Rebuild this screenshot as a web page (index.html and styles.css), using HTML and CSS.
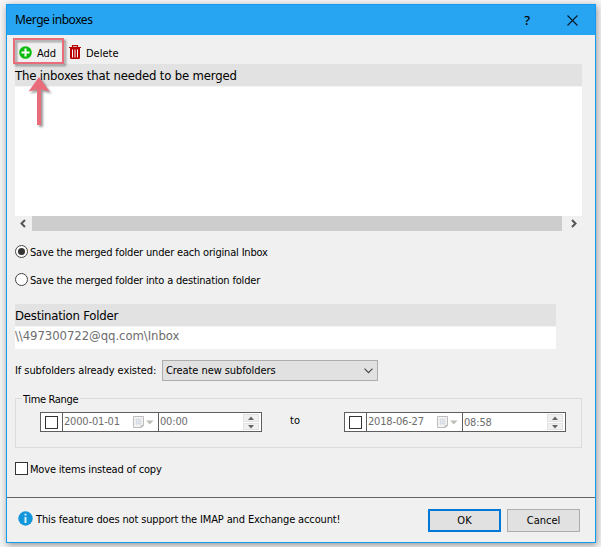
FILE: index.html
```html
<!DOCTYPE html>
<html lang="en">
<head>
<meta charset="utf-8">
<title>Merge inboxes</title>
<link rel="stylesheet" href="styles.css">
</head>
<body>
<main class="window">
  <header class="titlebar">
    <h1><span class="t-title">Merge inboxes</span></h1>
    <span class="help">?</span>
    <svg class="close" width="11" height="11" viewBox="0 0 11 11"><path d="M.5.5l10 10M10.5.5l-10 10" stroke="#0a1a26" stroke-width="1.1"/></svg>
  </header>
  <div class="content">
    <div class="toolbar">
      <div class="tool add">
        <svg width="13" height="13" viewBox="0 0 13 13"><circle cx="6.5" cy="6.5" r="6.3" fill="#0cbc0c"/><path d="M6.5 2.5v8M2.5 6.5h8" stroke="#fff" stroke-width="2"/></svg>
        <span class="t-add">Add</span>
      </div>
      <div class="tool delete">
        <svg width="12" height="14" viewBox="0 0 12 14"><path d="M0 2.500h12M3.500 2V.6h5V2" fill="none" stroke="#b80000" stroke-width="1.2"/><path d="M1 3h10v9.500q0 1.500-1.500 1.500h-7q-1.500 0-1.500-1.500z" fill="#b80000"/><path d="M3.500 4.500v8M6 4.500v8M8.500 4.500v8" stroke="#fff"/></svg>
        <span class="t-delete">Delete</span>
      </div>
    </div>
    <div class="list-head"><span class="t-list">The inboxes that needed to be merged</span></div>
    <div class="list"></div>
    <div class="scrollbar">
      <svg width="17" height="15" viewBox="0 0 17 15"><path d="M10 4L6.500 7.500L10 11" fill="none" stroke="#555" stroke-width="2"/></svg>
      <div class="thumb"></div>
      <svg width="20" height="15" viewBox="0 0 20 15"><path d="M10 4l3.500 3.500L10 11" fill="none" stroke="#555" stroke-width="2"/></svg>
    </div>
    <div class="option first"><span class="radio on"></span><span class="t-under">Save the merged folder under each original Inbox</span></div>
    <div class="option second"><span class="radio"></span><span class="t-into">Save the merged folder into a destination folder</span></div>
    <div class="dest-head"><span class="t-dest">Destination Folder</span></div>
    <div class="dest"><span class="t-mail">\\497300722@qq.com\Inbox</span></div>
    <div class="existing">
      <span class="t-if">If subfolders already existed:</span>
      <div class="select"><span class="t-create">Create new subfolders</span>
        <svg width="9" height="6" viewBox="0 0 9 6"><path d="M.5.7l4 4 4-4" fill="none" stroke="#444" stroke-width="1.100"/></svg>
      </div>
    </div>
    <section class="range">
      <h2><span class="t-range">Time Range</span></h2>
      <div class="datetime">
        <div class="cell check"><span class="box"></span></div>
        <div class="cell date"><span class="t-date">2000-01-01</span>
          <svg width="21" height="13" viewBox="0 0 21 13"><path d="M.5.5h10v9l-2 2h-8z" fill="#f3f3f4" stroke="#bdbdc0"/><path d="M2.500 3.500h6M2.500 5.500h6M2.500 7.500h6M3.500 2.500v6.500M5.500 2.500v6.500M7.500 2.500v6.500" stroke="#cfd5e3" stroke-width=".7"/><path d="M8 12v-2.500h3" fill="none" stroke="#bbb"/><path d="M13 4.500h7.500L16.750 8.500z" fill="#bdbdb8"/></svg>
        </div>
        <div class="cell time"><span class="t-time">00:00</span>
          <div class="spin"><svg width="16" height="8" viewBox="0 0 16 8"><path d="M5 6L8 2.500L11 6z" fill="#666"/></svg><svg width="16" height="7" viewBox="0 0 16 7"><path d="M5 2l3 3.500L11 2z" fill="#666"/></svg></div>
        </div>
      </div>
      <span class="to">to</span>
      <div class="datetime">
        <div class="cell check"><span class="box"></span></div>
        <div class="cell date"><span class="t-date">2018-06-27</span>
          <svg width="21" height="13" viewBox="0 0 21 13"><path d="M.5.5h10v9l-2 2h-8z" fill="#f3f3f4" stroke="#bdbdc0"/><path d="M2.500 3.500h6M2.500 5.500h6M2.500 7.500h6M3.500 2.500v6.500M5.500 2.500v6.500M7.500 2.500v6.500" stroke="#cfd5e3" stroke-width=".7"/><path d="M8 12v-2.500h3" fill="none" stroke="#bbb"/><path d="M13 4.500h7.500L16.750 8.500z" fill="#bdbdb8"/></svg>
        </div>
        <div class="cell time late"><span class="t-time">08:58</span>
          <div class="spin"><svg width="16" height="8" viewBox="0 0 16 8"><path d="M5 6L8 2.500L11 6z" fill="#666"/></svg><svg width="16" height="7" viewBox="0 0 16 7"><path d="M5 2l3 3.500L11 2z" fill="#666"/></svg></div>
        </div>
      </div>
    </section>
    <div class="option move"><span class="box"></span><span class="t-move">Move items instead of copy</span></div>
  </div>
  <footer class="footer">
    <svg width="15" height="15" viewBox="0 0 15 15"><circle cx="7.500" cy="7.500" r="7.200" fill="#1496dc"/><path d="M7.500 2.800v1.800M7.500 6v6" stroke="#d8f0fc" stroke-width="2"/></svg>
    <span class="note"><span class="t-note">This feature does not support the IMAP and Exchange account!</span></span>
    <button class="ok"><span class="t-ok">OK</span></button>
    <button><span class="t-cancel">Cancel</span></button>
  </footer>
  <div class="callout"></div>
  <svg class="arrow" width="26" height="54" viewBox="0 0 26 54"><path d="M11 0L21.500 14.500L13 12.500V48H9V12.500L.5 14.500z" fill="#e96c7b"/></svg>
</main>
</body>
</html>
```

FILE: styles.css
```css
* { box-sizing: border-box; }

body {
  margin: 0;
  padding: 4px 5px 4px 6px;
  height: 547px;
  overflow: hidden;
  background: #f4f4f4;
  color: #000;
  font: 11px/14px "DejaVu Sans Condensed", "DejaVu Sans", sans-serif;
  font-stretch: condensed;
  white-space: nowrap;
}

svg { display: block; flex: none; }

.window {
  position: relative;
  height: 539px;
  border: 1px solid #109bef;
  background: #f0f0f0;
  box-shadow: 1px 2px 7px rgba(0, 0, 0, .4);
}

.titlebar {
  display: flex;
  align-items: center;
  height: 30px;
  padding: 0 17px 0 8px;
  background: #27a5f3;
}

h1 {
  flex: 1;
  margin: 0;
  font: 12px/16px "Noto Sans", sans-serif;
  letter-spacing: -.45px;
}

.help {
  margin-right: 37px;
  font: 500 13px/16px "Noto Sans", sans-serif;
}

.content { height: 462px; padding: 0 13px 0 8px; }

.toolbar { display: flex; height: 29px; padding: 10px 0 0 4px; }
.tool { display: flex; align-items: flex-start; gap: 5px; }
.add { width: 50px; padding-top: 1px; }
.tool span { padding-top: 1px; }
.delete span { margin-top: 1px; }

.list-head, .dest-head {
  height: 23px;
  background: #e2e2e2;
  border-bottom: 1px solid #f4f4f4;
  font-size: 13px;
  line-height: 23px;
  letter-spacing: -.17px;
}

.list { height: 129px; background: #fff; }

.scrollbar { display: flex; height: 15px; }
.thumb { flex: 1; background: #cdcdcd; }

.option {
  display: flex;
  align-items: flex-start;
  gap: 2px;
  height: 14px;
  letter-spacing: -.18px;
}

.option span:last-child { padding-top: 1px; }
.first { margin-top: 14px; }
.second { margin-top: 14px; }

.radio {
  display: grid;
  place-items: center;
  width: 13px;
  height: 13px;
  border: 1px solid #444;
  border-radius: 50%;
  background: #fff;
}

.on::before {
  content: "";
  width: 7px;
  height: 7px;
  border-radius: 50%;
  background: #333;
}

.dest-head { width: 541px; margin-top: 17px; letter-spacing: -.22px; }

.dest {
  width: 541px;
  height: 22px;
  background: #fff;
  color: #6d6d6d;
  font-size: 13px;
  line-height: 18px;
  letter-spacing: -.07px;
}

.existing { display: flex; align-items: center; height: 21px; margin-top: 11px; letter-spacing: -.08px; }
.existing > span { width: 147px; }
.t-create { padding-top: 1px; }

.select {
  display: flex;
  align-items: center;
  justify-content: space-between;
  width: 216px;
  height: 21px;
  padding: 0 4px 0 3px;
  border: 1px solid #adadad;
  background: #e1e1e1;
}

.range {
  position: relative;
  display: flex;
  height: 50px;
  margin-top: 17px;
  padding: 13px 0 0 24px;
  border: 1px solid #dcdcdc;
}

h2 {
  position: absolute;
  top: -6px;
  left: 6px;
  margin: 0;
  padding: 0 1px;
  background: #f0f0f0;
  font: inherit;
  letter-spacing: -.35px;
}

.datetime {
  display: flex;
  width: 222px;
  height: 20px;
  border: 1px solid #5e5e5e;
  background: #fff;
  color: #6d6d6d;
  line-height: 18px;
  letter-spacing: -.17px;
}

.cell { display: flex; align-items: center; }
.check { width: 21px; padding-left: 4px; }
.date { width: 96px; padding-left: 1px; border-left: 1px solid #5e5e5e; justify-content: space-between; padding-right: 4px; }
.time { flex: 1; justify-content: space-between; padding: 0 2px 0 1px; border-left: 1px solid #5e5e5e; }
.late > span { padding-top: 2px; }

.box {
  width: 13px;
  height: 13px;
  border: 1px solid #333;
  background: #fff;
}

.spin { display: grid; gap: 1px; }
.spin svg { background: #f0f0f0; outline: 1px solid #e2e2e2; outline-offset: -1px; }

.to { width: 82px; padding: 2px 0 0 28px; }

.move { margin-top: 14px; }

.footer {
  display: flex;
  height: 45px;
  padding: 11px 15px 0 11px;
  border-top: 1px solid #646464;
}

.footer > svg { margin-top: 2px; }
.note { flex: 1; padding: 4px 0 0 3px; letter-spacing: -.14px; }

button {
  width: 73px;
  height: 23px;
  padding: 0;
  border: 1px solid #adadad;
  background: #e1e1e1;
  color: #000;
  font: inherit;
}

.ok { margin-right: 6px; border: 2px solid #0078d7; }

.callout {
  position: absolute;
  top: 33px;
  left: 6px;
  width: 51px;
  height: 26px;
  border: 2px solid #e96c7b;
  filter: drop-shadow(2px 2px 1px rgba(0, 0, 0, .4));
}

.arrow {
  position: absolute;
  top: 72px;
  left: 21px;
  filter: drop-shadow(2px 2px 1px rgba(0, 0, 0, .4));
}
```
